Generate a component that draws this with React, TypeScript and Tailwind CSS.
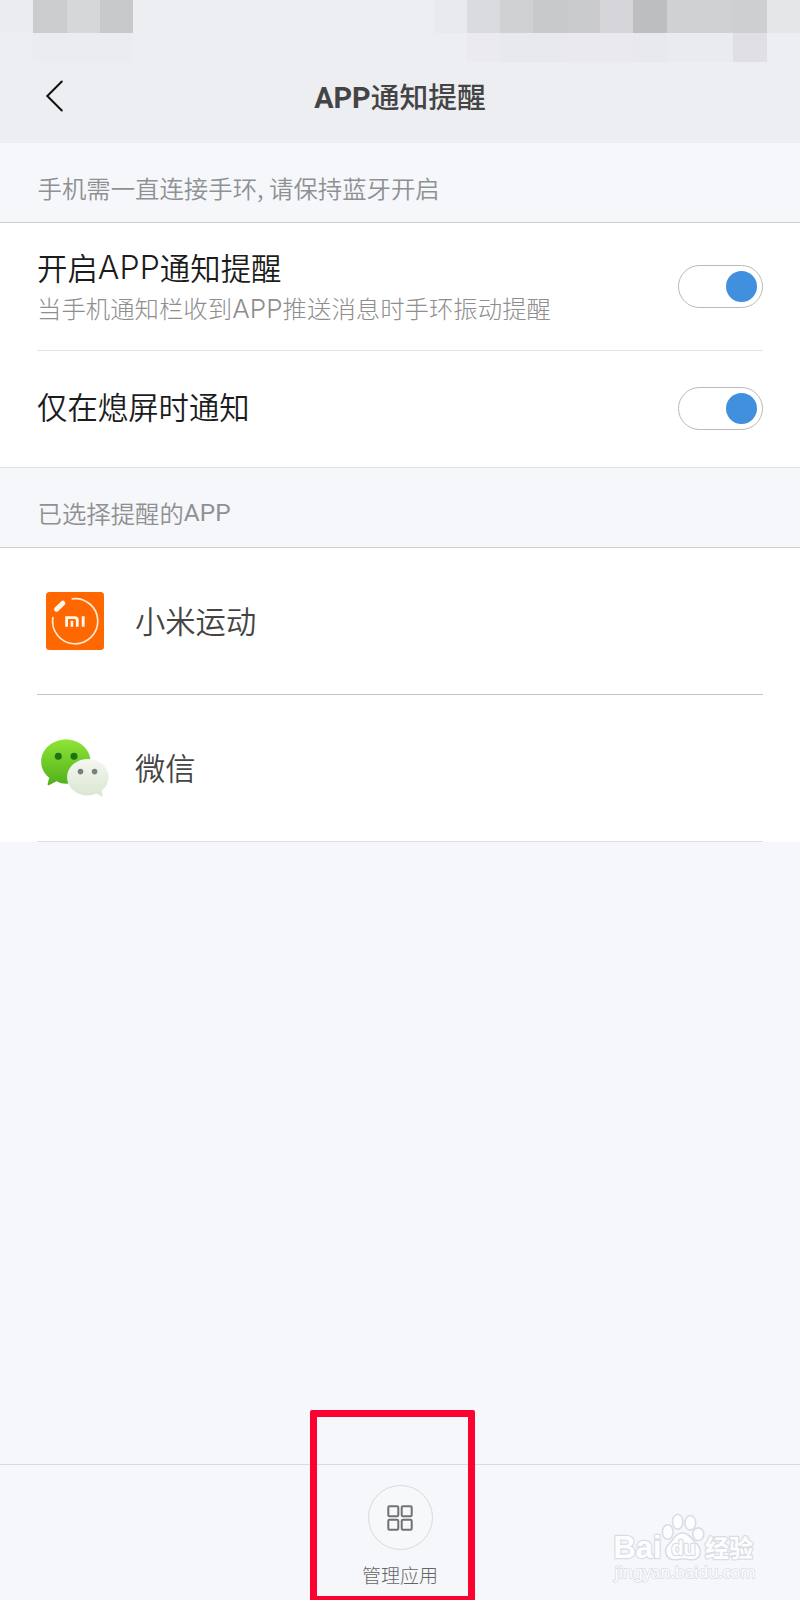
import type { ReactNode } from "react";

const cjk = "font-['Noto_Sans_CJK_SC',sans-serif]";

function StatusBar() {
  return (
    <div className="h-[62px] w-full shrink-0">
      <div className="flex h-[33px]">
        <div className="w-[33px] bg-[#ebecf0]" />
        <div className="w-[34px] bg-[#cbccce]" />
        <div className="w-[33px] bg-[#d6d7d9]" />
        <div className="w-[33px] bg-[#c8c9cb]" />
        <div className="w-[301px]" />
        <div className="w-[33px] bg-[#e9eaed]" />
        <div className="w-[33px] bg-[#dadbde]" />
        <div className="w-[33px] bg-[#d0d1d2]" />
        <div className="w-[34px] bg-[#c8c9ca]" />
        <div className="w-[33px] bg-[#cacbcc]" />
        <div className="w-[33px] bg-[#d5d4d8]" />
        <div className="w-[34px] bg-[#bdbebf]" />
        <div className="w-[66px] bg-[#d0d1d2]" />
        <div className="w-[34px] bg-[#cecfd0]" />
        <div className="flex-1 bg-[#e5e6e8]" />
      </div>
      <div className="flex h-[29px]">
        <div className="w-[33px]" />
        <div className="w-[100px] bg-[#ebecef]" />
        <div className="w-[334px]" />
        <div className="w-[33px] bg-[#ebebef]" />
        <div className="w-[66px] bg-[#e8e9ec]" />
        <div className="w-[67px] bg-[#eaeaee]" />
        <div className="w-[34px] bg-[#e8e9ec]" />
        <div className="w-[66px] bg-[#eaebee]" />
        <div className="w-[34px] bg-[#e0dfe3]" />
        <div className="flex-1" />
      </div>
    </div>
  );
}

function Toggle() {
  return (
    <div className="flex h-[43px] w-[85px] shrink-0 items-center justify-end rounded-full border border-[#b9b9bb] bg-white pr-[5px]">
      <div className="size-[31px] rounded-full bg-[#4090de]" />
    </div>
  );
}

function MiIcon() {
  return (
    <svg width="58" height="58" viewBox="0 0 58 58">
      <rect width="58" height="58" rx="3.5" fill="#ff6700" />
      <path d="M26.3 6.8A22.6 22.6 0 1 1 6.9 25.5" fill="none" stroke="#ffe9d2" strokeWidth="1.7" strokeLinecap="round" />
      <path d="M10.6 17.2L16.8 11.2" stroke="#fff6ec" strokeWidth="5" strokeLinecap="round" />
      <path d="M20.6 34.8V25.6H28.6Q31.3 25.6 31.3 28.2V34.8" fill="none" stroke="#fff6ec" strokeWidth="2.8" />
      <path d="M25.9 28.8V34.8" stroke="#fff6ec" strokeWidth="2.6" />
      <path d="M37.2 24.2V34.8" stroke="#fff6ec" strokeWidth="2.9" />
    </svg>
  );
}

function WeChatIcon() {
  return (
    <svg width="70" height="60" viewBox="0 0 70 60">
      <defs>
        <linearGradient id="wg" x1="0" y1="0" x2="0" y2="1">
          <stop offset="0" stopColor="#8fe436" />
          <stop offset="1" stopColor="#50b01c" />
        </linearGradient>
        <linearGradient id="ww" x1="0" y1="0" x2="0" y2="1">
          <stop offset="0" stopColor="#f4f7f1" />
          <stop offset="1" stopColor="#d9e6d1" />
        </linearGradient>
      </defs>
      <path d="M26 1.5C12.200 1.500 1.200 11.300 1.200 23.800C1.200 30.500 4.300 35.700 9.200 39.700L7.600 46.200Q7.600 47.800 9.300 46.900L16.500 43.200Q21 45.700 26 45.700C39.700 45.700 50.500 35.900 50.500 23.600C50.500 11.300 39.700 1.500 26 1.500Z" fill="url(#wg)" />
      <circle cx="18.300" cy="18.300" r="3.500" fill="#187415" />
      <circle cx="34" cy="18.300" r="3.500" fill="#187415" />
      <path d="M47.800 21C36.400 21 27.100 29.100 27.100 39.200C27.100 49.300 36.400 57.500 47.800 57.500Q52.500 57.500 56.400 55.600L61.500 58.300Q62.900 58.900 62.600 57.500L61.500 52.700Q68.600 47 68.600 39.200C68.600 29.100 59.200 21 47.800 21Z" fill="url(#ww)" />
      <circle cx="40.500" cy="33.600" r="2.800" fill="#788178" />
      <circle cx="54.600" cy="33.600" r="2.800" fill="#788178" />
    </svg>
  );
}

function SectionLabel({ children }: { children: ReactNode }) {
  return (
    <div className="flex h-[80px] shrink-0 items-center border-b border-[#cdcfd1] pl-[37.500px] pt-[11px] text-[24.4px] font-[350] leading-none text-[#8f9092]">
      {children}
    </div>
  );
}

function AppRow({ icon, name, last }: { icon: ReactNode; name: string; last?: boolean }) {
  return (
    <div
      className={
        last
          ? "mx-[37px] flex h-[147px] items-center border-b border-[#dcdde0]"
          : "mx-[37px] flex h-[147px] items-center border-b border-[#c5c5c7]"
      }
    >
      <div className="flex w-[98px] shrink-0 items-center">{icon}</div>
      <div className="pb-[2px] text-[30.3px] font-[350] leading-none text-[#444]">{name}</div>
    </div>
  );
}

function Watermark() {
  return (
    <svg className="absolute left-[608px] top-[1508px]" width="160" height="80" viewBox="0 0 160 80">
      <g fill="#fcfdff" stroke="#dcdde3" strokeWidth="1.600">
        <ellipse cx="59.700" cy="24" rx="5.300" ry="7.300" />
        <ellipse cx="69.700" cy="13.700" rx="5.200" ry="7.500" />
        <ellipse cx="82.300" cy="14.800" rx="5.400" ry="7.300" />
        <ellipse cx="90.300" cy="26.200" rx="5.500" ry="6.300" />
        <path d="M74.500 25C67 25 66 31.500 61.500 35.300C55 41 57 51.200 66 51.700C70 51.900 72 50.700 75 50.700C78 50.700 81 52 85 51.700C93.500 50.700 94.500 41 88.500 35.300C83.500 31.500 82 25 74.500 25Z" />
        <g strokeLinejoin="round" style={{ paintOrder: "stroke" }} strokeWidth="2.600" fontWeight="700">
          <text x="5.500" y="50" fontSize="32" fontFamily="Liberation Sans, sans-serif" textLength="48" lengthAdjust="spacingAndGlyphs">Bai</text>
          <text x="63.500" y="47" fontSize="20" fontFamily="Liberation Sans, sans-serif" textLength="24" lengthAdjust="spacingAndGlyphs">du</text>
          <text x="97" y="49.300" fontSize="24" fontFamily="Noto Sans CJK SC, sans-serif">经验</text>
        </g>
        <text x="6.500" y="70" fontSize="16.500" strokeWidth="1.600" style={{ paintOrder: "stroke" }} fontFamily="Noto Sans, sans-serif" textLength="141" lengthAdjust="spacingAndGlyphs">jingyan.baidu.com</text>
      </g>
    </svg>
  );
}

export default function App() {
  return (
    <div className={`relative flex h-[1600px] w-[800px] flex-col overflow-hidden bg-[#f5f7fb] ${cjk}`}>
      <header className="h-[143px] shrink-0 bg-[#edeef2]">
        <StatusBar />
        <div className="grid h-[68px] grid-cols-[100px_1fr_100px] items-center">
          <svg className="ml-[45px]" width="20" height="32" viewBox="0 0 20 32">
            <path d="M16.800 1.500L2.300 16L16.800 30.500" fill="none" stroke="#111" strokeWidth="2" strokeLinecap="round" />
          </svg>
          <h1 className="pt-[4px] text-center font-['Roboto','Noto_Sans_CJK_SC',sans-serif] text-[28.8px] font-bold leading-none text-[#444]">
            APP<span className="font-medium">通知提醒</span>
          </h1>
        </div>
      </header>

      <SectionLabel>手机需一直连接手环, 请保持蓝牙开启</SectionLabel>

      <section className="h-[245px] shrink-0 border-b border-[#dfe0e2] bg-white">
        <div className="mx-[37px] flex h-[128px] items-center justify-between border-b border-[#e5e5e6]">
          <div className="pt-[2px]">
            <div className="flex h-[42px] items-center text-[30.4px] font-[350] leading-none text-[#1c1c1c]">
              开启<span className="font-['Inter'] text-[32px] font-[350] tracking-[0.1px]">APP</span>通知提醒
            </div>
            <div className="flex h-[40px] items-center text-[24.4px] font-light leading-none text-[#8e8e8e]">
              当手机通知栏收到<span className="font-['Inter'] text-[26px] tracking-[0.1px]">APP</span>推送消息时手环振动提醒
            </div>
          </div>
          <Toggle />
        </div>
        <div className="mx-[37px] flex h-[114px] items-center justify-between">
          <div className="pb-[4px] text-[30.400px] font-[350] leading-none text-[#1c1c1c]">仅在熄屏时通知</div>
          <Toggle />
        </div>
      </section>

      <SectionLabel>
        已选择提醒的<span className="font-['Roboto'] font-normal">APP</span>
      </SectionLabel>

      <section className="h-[294px] shrink-0 bg-white">
        <AppRow icon={<div className="ml-[9px]"><MiIcon /></div>} name="小米运动" />
        <AppRow icon={<div className="ml-[3px]"><WeChatIcon /></div>} name="微信" last />
      </section>

      <div className="flex-1" />

      <footer className="flex h-[136px] shrink-0 flex-col items-center border-t border-[#d9dbe0] pt-[20px]">
        <div className="flex size-[65px] items-center justify-center rounded-full border border-[#d8d9dc] bg-[#f7f8fa]">
          <svg width="26" height="26" viewBox="0 0 26 26" fill="none" stroke="#707173" strokeWidth="2">
            <rect x="1.300" y="1.300" width="10" height="10" rx="1.200" />
            <rect x="14.700" y="1.300" width="10" height="10" rx="1.200" />
            <rect x="1.300" y="14.700" width="10" height="10" rx="1.200" />
            <rect x="14.700" y="14.700" width="10" height="10" rx="1.200" />
          </svg>
        </div>
        <div className="mt-[15px] text-[19px] font-light leading-none text-[#666]">管理应用</div>
      </footer>

      <Watermark />
      <div className="absolute left-[310px] top-[1410px] h-[193px] w-[165px] rounded-[2px] border-[7px] border-[#fb0230]" />
    </div>
  );
}
